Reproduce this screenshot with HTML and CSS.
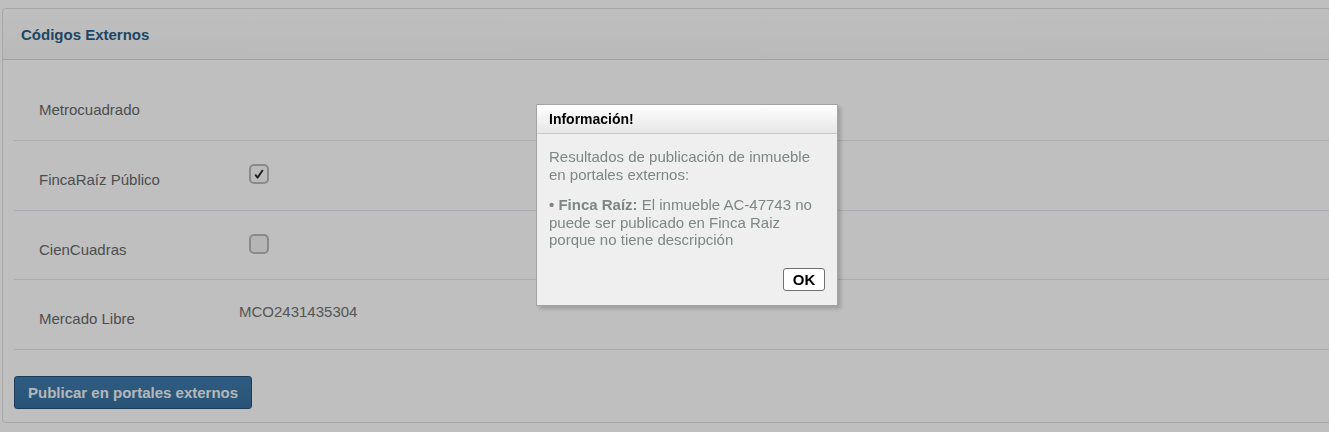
FILE: index.html
```html
<!DOCTYPE html>
<html lang="es">

<head>
    <meta charset="UTF-8">
    <meta name="viewport" content="width=device-width, initial-scale=1.0">
    <title>Códigos Externos</title>
    <link rel="stylesheet" href="styles.css">
</head>

<body>
    <div class="panel">
        <div class="panel-heading">Códigos Externos</div>

        <div class="panel-body">
            <div class="row">
                <label class="row-label">Metrocuadrado</label>
                <div class="row-value"></div>
            </div>

            <div class="row">
                <label class="row-label">FincaRaíz Público</label>
                <div class="row-value">
                    <span class="check checked">
                        <svg width="12" height="12" viewBox="0 0 12 12">
                            <path d="M2.2 6.6 L4.6 9.6 L9.8 2" fill="none" stroke="#2b2b2b" stroke-width="1.9" stroke-linejoin="round" />
                        </svg>
                    </span>
                </div>
            </div>

            <div class="row">
                <label class="row-label">CienCuadras</label>
                <div class="row-value">
                    <span class="check"></span>
                </div>
            </div>

            <div class="row">
                <label class="row-label">Mercado Libre</label>
                <div class="row-value code">MCO2431435304</div>
            </div>

            <button class="btn-publish">Publicar en portales externos</button>
        </div>
    </div>

    <div class="overlay"></div>

    <div class="dialog">
        <div class="dialog-title">Información!</div>
        <div class="dialog-body">
            <p>Resultados de publicación de inmueble en portales externos:</p>
            <p><b>• Finca Raíz:</b> El inmueble AC-47743 no puede ser publicado en Finca Raiz porque no tiene descripción</p>
            <div class="dialog-actions">
                <button class="btn-ok">OK</button>
            </div>
        </div>
    </div>
</body>

</html>
```

FILE: styles.css
```css
body {
    margin: 0;
    background: #ffffff;
    font-family: "Liberation Sans", Arial, sans-serif;
    font-size: 15px;
    overflow: hidden;
}

.panel {
    margin: 8px -12px 0 2px;
    border: 1px solid #dedede;
    border-radius: 4px;
    background: #ffffff;
}

.panel-heading {
    height: 51px;
    box-sizing: border-box;
    padding: 0 0 0 18px;
    display: flex;
    align-items: center;
    font-weight: bold;
    color: #2a5e86;
    background: linear-gradient(#ffffff, #f6f8f6);
    border-bottom: 1px solid #cbdcd8;
    border-radius: 4px 4px 0 0;
}

.panel-body {
    padding: 11px 0 13px 11px;
}

.row {
    height: 70px;
    box-sizing: border-box;
    border-bottom: 1px solid #e2e5ea;
    display: flex;
    color: #666a6c;
}

.row:nth-child(3) {
    height: 69px;
}

.row-label {
    width: 225px;
    padding: 30px 0 0 25px;
    box-sizing: border-box;
    line-height: 17px;
}

.row-value {
    padding-top: 23px;
}

.row-value.code {
    padding-top: 23px;
    line-height: 17px;
    color: #6f7375;
}

.check {
    display: flex;
    align-items: center;
    justify-content: center;
    width: 20px;
    height: 20px;
    box-sizing: border-box;
    margin-left: 10px;
    border: 2px solid #b8b8b8;
    border-radius: 5px;
    background: #f2f2f2;
}

.check.checked {
    background: #fafafa;
}

.btn-publish {
    margin-top: 26px;
    height: 33px;
    padding: 0 13px;
    font-family: inherit;
    font-size: 15px;
    font-weight: bold;
    color: #f0f3f7;
    background: linear-gradient(#3e7bab, #37709e);
    border: 1px solid #255278;
    border-radius: 3px;
}

.overlay {
    position: fixed;
    inset: 0;
    background: rgba(0, 0, 0, 0.25);
}

.dialog {
    position: fixed;
    left: 536px;
    top: 104px;
    width: 302px;
    height: 202px;
    box-sizing: border-box;
    border: 1px solid #a3a3a3;
    background: #efefef;
    box-shadow: 3px 3px 4px rgba(0, 0, 0, 0.18);
}

.dialog-title {
    height: 29px;
    box-sizing: border-box;
    padding: 0 12px;
    display: flex;
    align-items: center;
    font-size: 14px;
    font-weight: bold;
    color: #000000;
    background: linear-gradient(#ffffff, #e6e6e6);
    border-bottom: 1px solid #c8c8c8;
}

.dialog-body {
    padding: 14px 12px 0 12px;
    color: #7e8686;
    line-height: 17.5px;
}

.dialog-body p {
    margin: 0 0 13px 0;
}

.dialog-actions {
    display: flex;
    justify-content: flex-end;
    margin-top: 19px;
}

.btn-ok {
    width: 42px;
    height: 23px;
    padding: 0;
    font-family: inherit;
    font-size: 15px;
    font-weight: bold;
    color: #000000;
    background: #ffffff;
    border: 1px solid #707070;
    border-radius: 3px;
}
```
